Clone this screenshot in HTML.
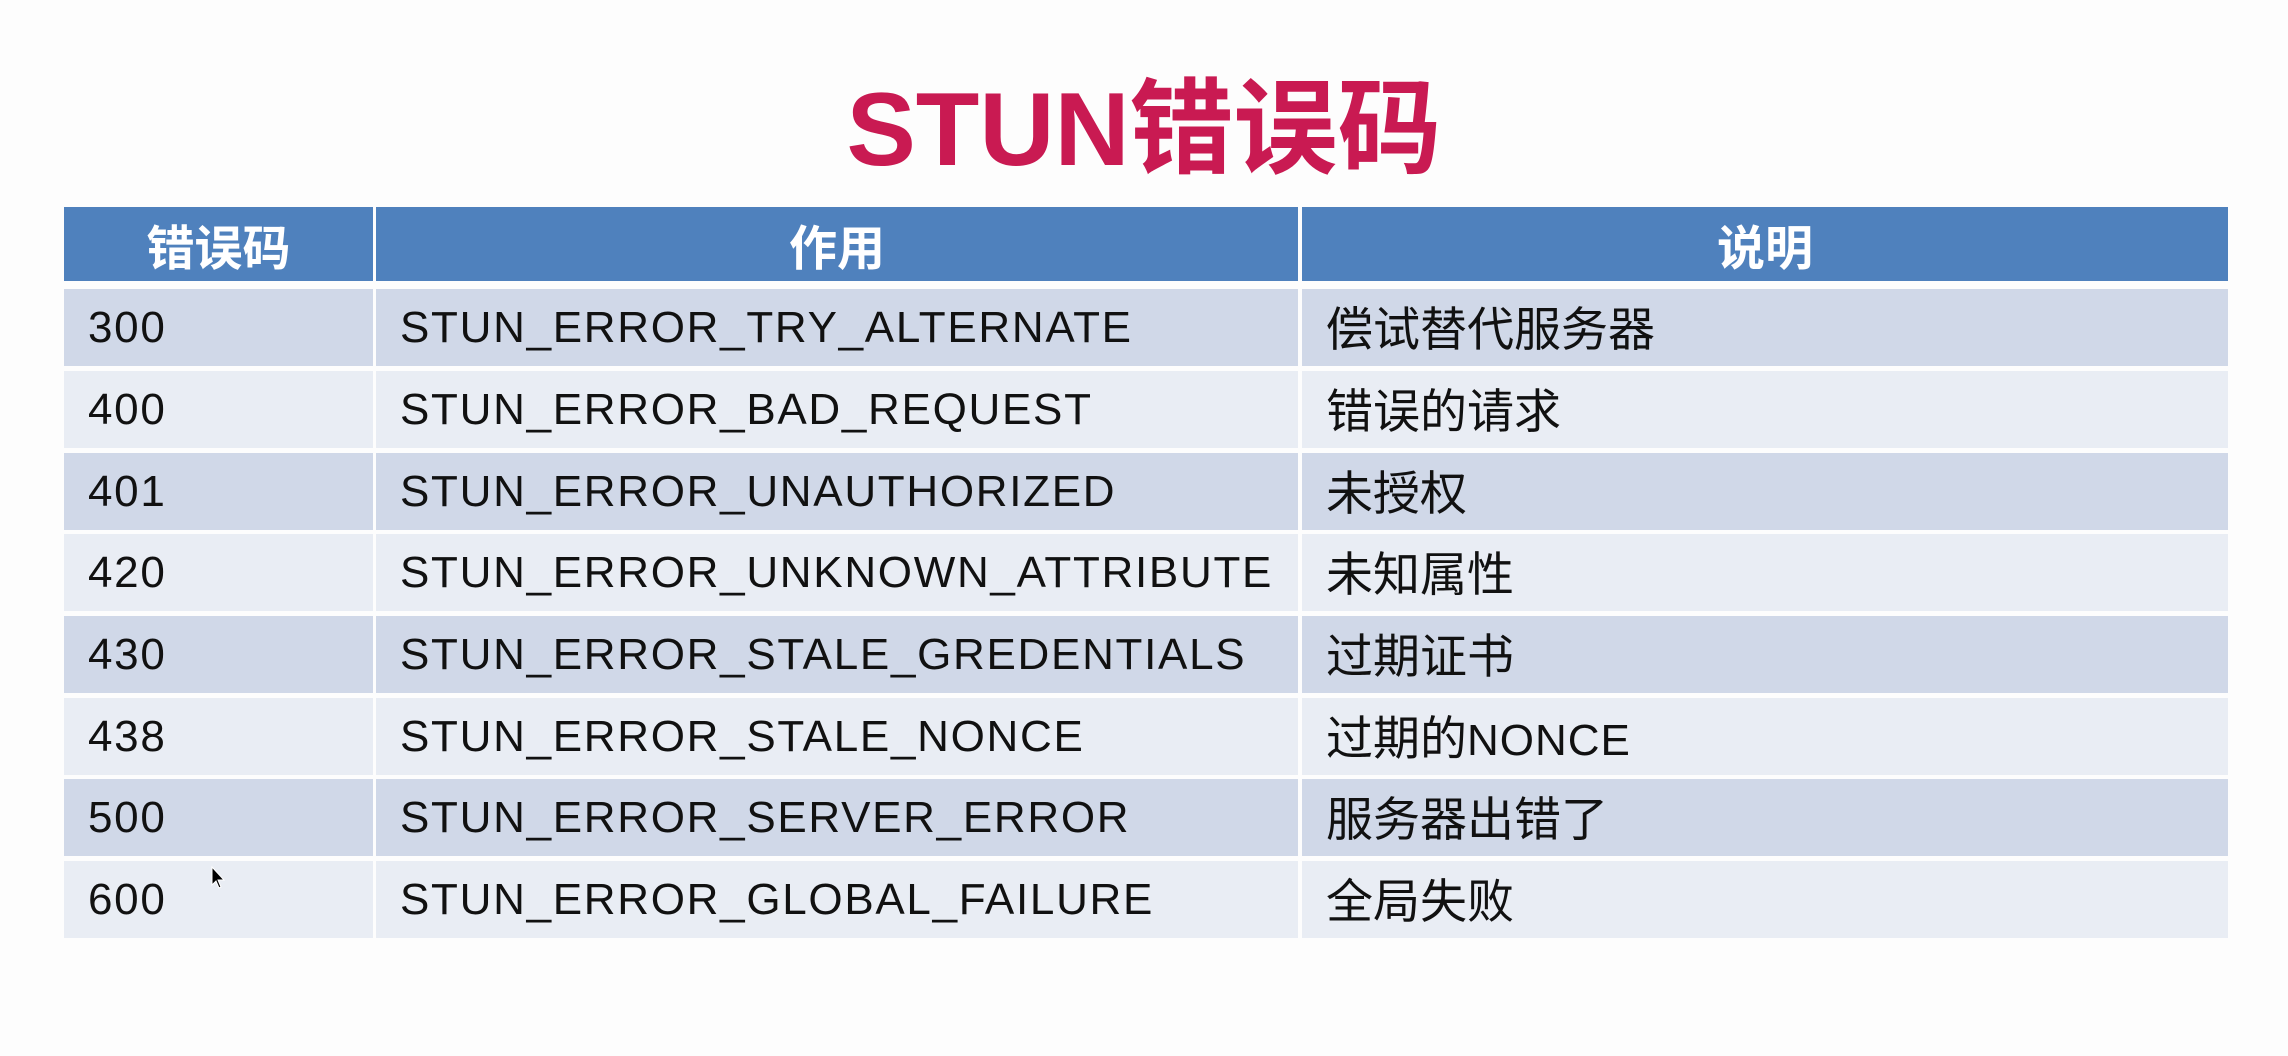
<!DOCTYPE html>
<html><head><meta charset="utf-8"><style>
body{margin:0;width:2288px;height:1056px;background:#fdfdfd;position:relative;overflow:hidden;font-family:"Liberation Sans","Noto Sans CJK SC",sans-serif}
.title{position:absolute;top:70px;left:0;width:2288px;text-align:center;font-size:104px;font-weight:bold;color:#c91a52;line-height:120px}
.c{position:absolute;box-sizing:border-box;display:flex;align-items:center}
.h{background:#4f81bd;color:#fff;font-weight:bold;font-size:48px;justify-content:center;top:207px;height:74px}
.o{background:#d0d8e8}.e{background:#e9edf4}
.t{font-size:44px;color:#111;padding-left:24px;letter-spacing:1.7px}
.z{font-size:47px;letter-spacing:0;line-height:1;position:relative;top:2px}
</style></head><body>
<div class="title">STUN错误码</div>
<div class="c h" style="left:64px;width:309px">错误码</div>
<div class="c h" style="left:376px;width:922px">作用</div>
<div class="c h" style="left:1302px;width:926px">说明</div>
<div style="position:absolute;left:0;top:0">
<div class="c o t" style="left:64px;top:289px;width:309px;height:77px">300</div><div class="c o t" style="left:376px;top:289px;width:922px;height:77px">STUN_ERROR_TRY_ALTERNATE</div><div class="c o t" style="left:1302px;top:289px;width:926px;height:77px"><span class="z">偿试替代服务器</span></div>
<div class="c e t" style="left:64px;top:371px;width:309px;height:77px">400</div><div class="c e t" style="left:376px;top:371px;width:922px;height:77px">STUN_ERROR_BAD_REQUEST</div><div class="c e t" style="left:1302px;top:371px;width:926px;height:77px"><span class="z">错误的请求</span></div>
<div class="c o t" style="left:64px;top:453px;width:309px;height:77px">401</div><div class="c o t" style="left:376px;top:453px;width:922px;height:77px">STUN_ERROR_UNAUTHORIZED</div><div class="c o t" style="left:1302px;top:453px;width:926px;height:77px"><span class="z">未授权</span></div>
<div class="c e t" style="left:64px;top:534px;width:309px;height:77px">420</div><div class="c e t" style="left:376px;top:534px;width:922px;height:77px">STUN_ERROR_UNKNOWN_ATTRIBUTE</div><div class="c e t" style="left:1302px;top:534px;width:926px;height:77px"><span class="z">未知属性</span></div>
<div class="c o t" style="left:64px;top:616px;width:309px;height:77px">430</div><div class="c o t" style="left:376px;top:616px;width:922px;height:77px">STUN_ERROR_STALE_GREDENTIALS</div><div class="c o t" style="left:1302px;top:616px;width:926px;height:77px"><span class="z">过期证书</span></div>
<div class="c e t" style="left:64px;top:698px;width:309px;height:77px">438</div><div class="c e t" style="left:376px;top:698px;width:922px;height:77px">STUN_ERROR_STALE_NONCE</div><div class="c e t" style="left:1302px;top:698px;width:926px;height:77px"><span class="z">过期的<span style="font-size:44px;letter-spacing:1px">NONCE</span></span></div>
<div class="c o t" style="left:64px;top:779px;width:309px;height:77px">500</div><div class="c o t" style="left:376px;top:779px;width:922px;height:77px">STUN_ERROR_SERVER_ERROR</div><div class="c o t" style="left:1302px;top:779px;width:926px;height:77px"><span class="z">服务器出错了</span></div>
<div class="c e t" style="left:64px;top:861px;width:309px;height:77px">600</div><div class="c e t" style="left:376px;top:861px;width:922px;height:77px">STUN_ERROR_GLOBAL_FAILURE</div><div class="c e t" style="left:1302px;top:861px;width:926px;height:77px"><span class="z">全局失败</span></div>
</div>
<svg style="position:absolute;left:211px;top:866px" width="16" height="24" viewBox="0 0 16 24"><path d="M1 1 L1 19 L5 15 L8 22 L10 21 L7 14 L13 14 Z" fill="#000" stroke="#fff" stroke-width="1"/></svg>
</body></html>
